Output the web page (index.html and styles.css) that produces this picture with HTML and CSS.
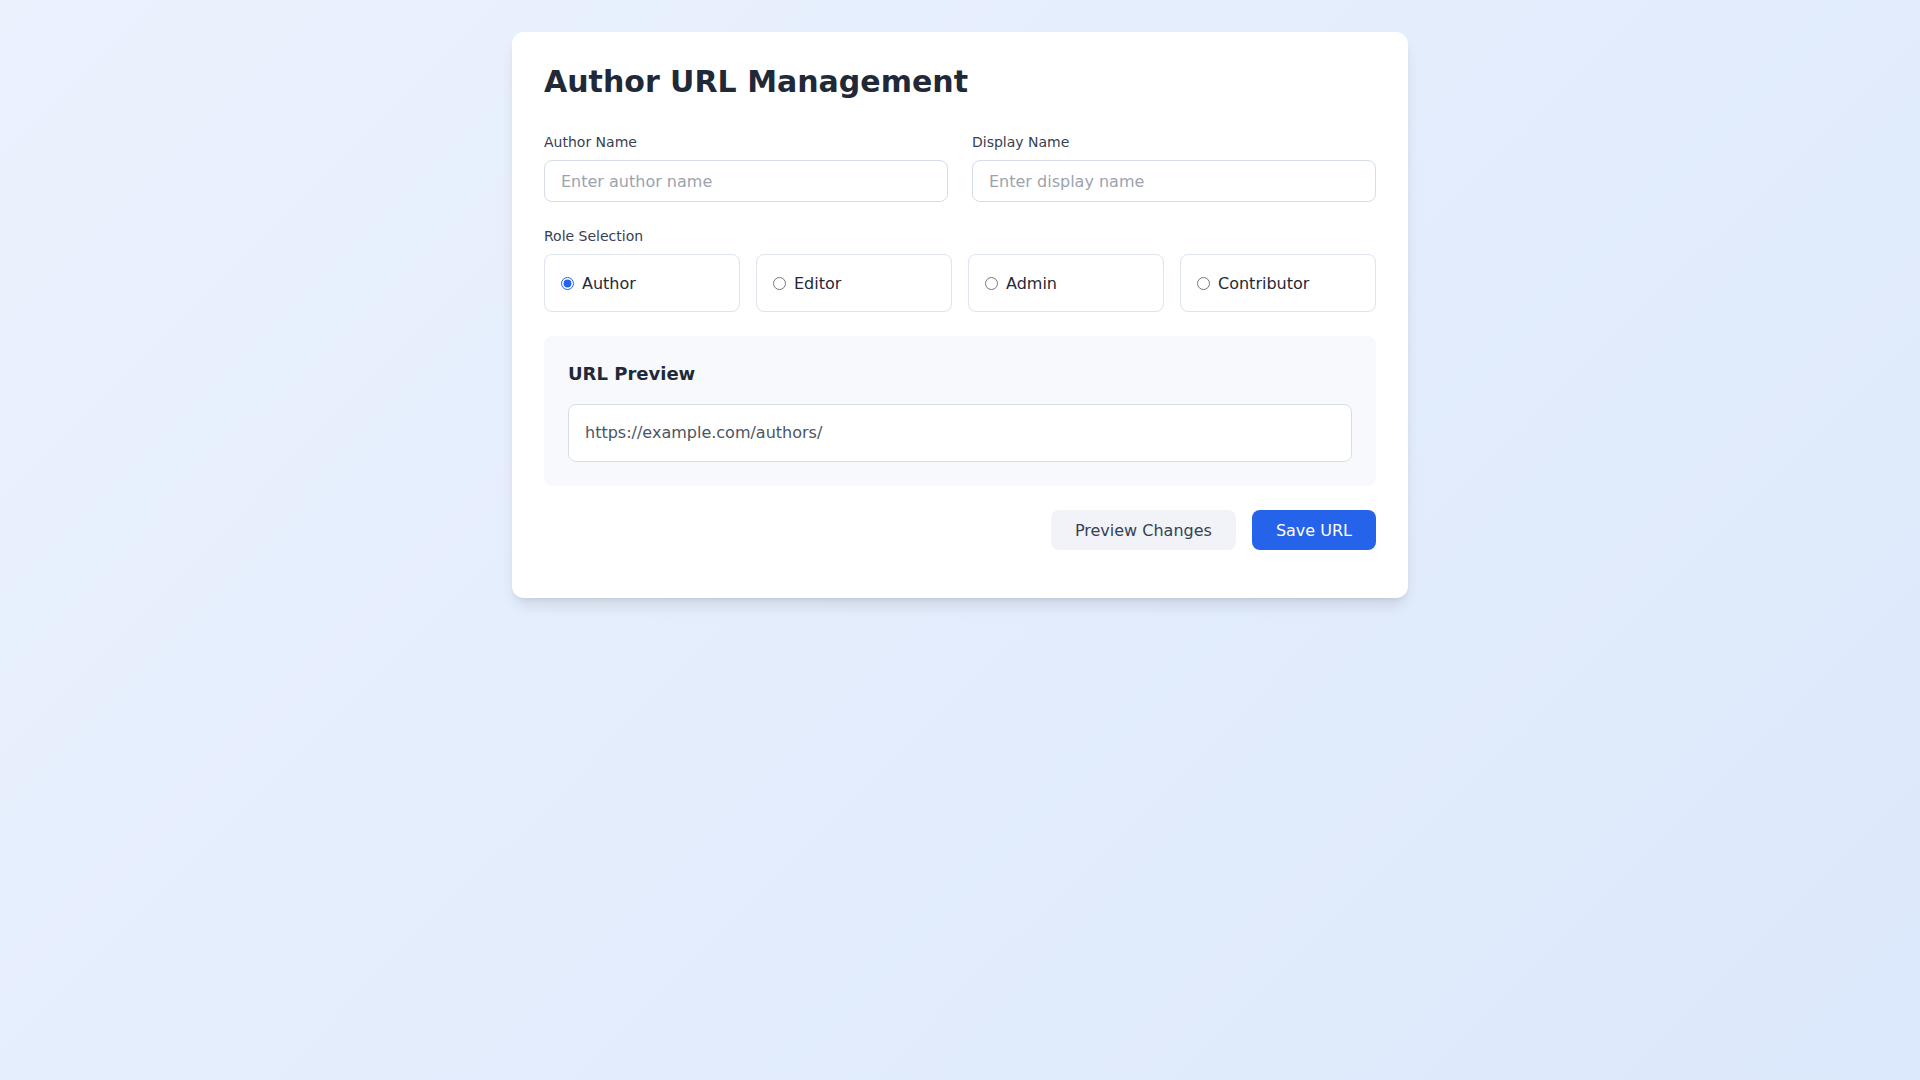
FILE: index.html
```html
<!DOCTYPE html>
<html lang="en">
<head>
<meta charset="utf-8">
<title>Author URL Management</title>
<link rel="stylesheet" href="styles.css">
</head>
<body>
<main class="page">
  <section class="card">
    <h1 class="title">Author URL Management</h1>
    <div class="grid-2">
      <div class="field">
        <label class="label" for="author">Author Name</label>
        <input class="input" id="author" type="text" placeholder="Enter author name">
      </div>
      <div class="field">
        <label class="label" for="display">Display Name</label>
        <input class="input" id="display" type="text" placeholder="Enter display name">
      </div>
    </div>
    <div class="role-section">
      <div class="label">Role Selection</div>
      <div class="roles">
        <label class="role"><input type="radio" name="role" checked><span>Author</span></label>
        <label class="role"><input type="radio" name="role"><span>Editor</span></label>
        <label class="role"><input type="radio" name="role"><span>Admin</span></label>
        <label class="role"><input type="radio" name="role"><span>Contributor</span></label>
      </div>
    </div>
    <div class="preview">
      <h2 class="preview-title">URL Preview</h2>
      <div class="preview-url">https://example.com/authors/</div>
    </div>
    <div class="actions">
      <button class="btn btn-secondary" type="button">Preview Changes</button>
      <button class="btn btn-primary" type="button">Save URL</button>
    </div>
  </section>
</main>
</body>
</html>
```

FILE: styles.css
```css
* { box-sizing: border-box; }
html, body { margin: 0; padding: 0; }
body {
  min-height: 100vh;
  font-family: "DejaVu Sans", "Noto Sans", sans-serif;
  background: linear-gradient(135deg, #ebf2fe 0%, #dce8fb 100%);
  color: #1f2937;
}
.page {
  padding: 32px 16px;
  display: flex;
  justify-content: center;
}
.card {
  width: 896px;
  background: #ffffff;
  border-radius: 12px;
  box-shadow: 0 10px 15px -3px rgba(0,0,0,0.1), 0 4px 6px -4px rgba(0,0,0,0.1);
  padding: 32px 32px 48px;
}
.title {
  margin: 0 0 32px;
  font-size: 30px;
  line-height: 36px;
  font-weight: 700;
  color: #1f2937;
}
.grid-2 {
  display: grid;
  grid-template-columns: 1fr 1fr;
  gap: 24px;
  margin-bottom: 24px;
}
.field { display: flex; flex-direction: column; }
.label {
  display: block;
  font-size: 14px;
  line-height: 20px;
  color: #374151;
  margin-bottom: 8px;
}
.input {
  height: 42px;
  padding: 0 16px;
  font-family: inherit;
  font-size: 16px;
  color: #1f2937;
  border: 1px solid #d6dce8;
  border-radius: 8px;
  background: #fff;
  outline: none;
}
.input::placeholder { color: #9ca3af; }
.role-section { margin-bottom: 24px; }
.roles {
  display: grid;
  grid-template-columns: repeat(4, 1fr);
  gap: 16px;
}
.role {
  display: flex;
  align-items: center;
  height: 58px;
  padding: 0 16px;
  border: 1px solid #dde4f0;
  border-radius: 8px;
  font-size: 16px;
  color: #1f2937;
  cursor: pointer;
}
.role input {
  width: 13px;
  height: 13px;
  margin: 1px 8px 0 0;
  accent-color: #2563eb;
}
.preview {
  background: #f8f9fd;
  border-radius: 8px;
  padding: 24px;
  margin-bottom: 24px;
}
.preview-title {
  margin: 0 0 16px;
  font-size: 18px;
  line-height: 28px;
  font-weight: 600;
  color: #1f2937;
}
.preview-url {
  background: #fff;
  border: 1px solid #d9dfe9;
  border-radius: 8px;
  padding: 16px;
  font-size: 16px;
  line-height: 24px;
  color: #4b5563;
}
.actions {
  display: flex;
  justify-content: flex-end;
  gap: 16px;
}
.btn {
  height: 40px;
  padding: 0 24px;
  font-family: inherit;
  font-size: 16px;
  border: none;
  border-radius: 8px;
  cursor: pointer;
}
.btn-secondary {
  background: #f1f3f8;
  color: #374151;
}
.btn-primary {
  background: #2563eb;
  color: #ffffff;
}
```
